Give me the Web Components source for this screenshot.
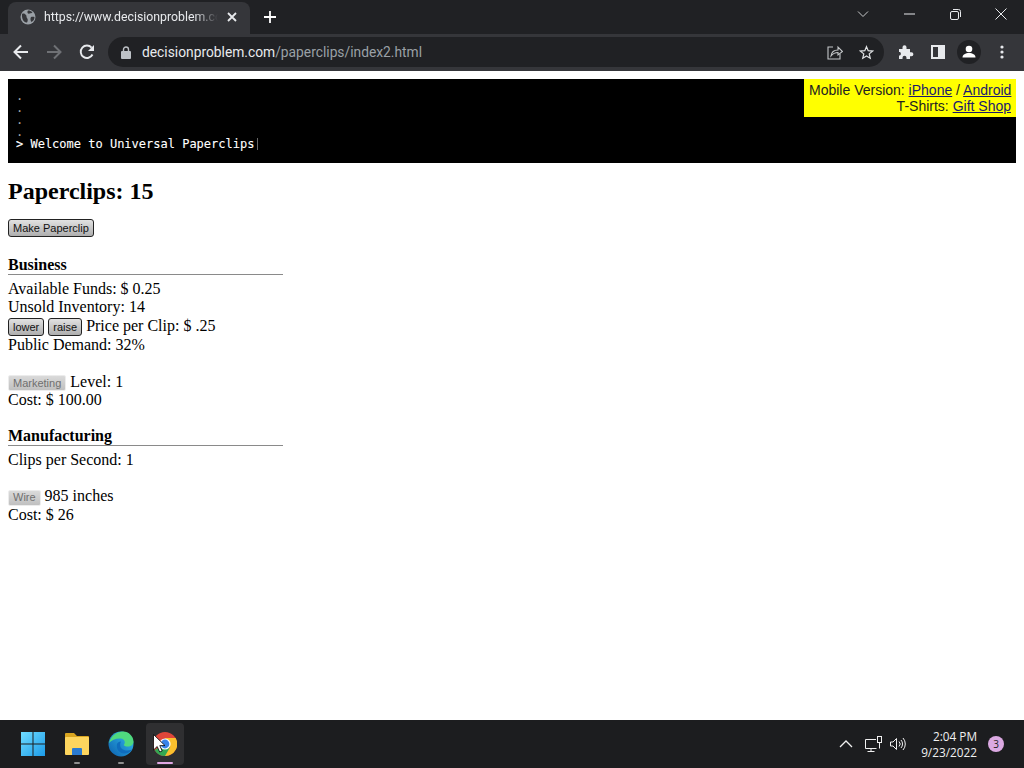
<!DOCTYPE html>
<html lang="en"><head><meta charset="utf-8"><title>Universal Paperclips</title>
<style>
html,body{margin:0;height:768px;overflow:hidden;background:#fff}
body{display:flex;flex-direction:column;width:1024px}
game-page{flex:1;min-height:0}
</style></head><body>
<browser-chrome></browser-chrome>
<game-page>
  <console-panel><promo-box></promo-box></console-panel>
  <clip-count>Paperclips: 15</clip-count>
  <action-row><push-button>Make Paperclip</push-button></action-row>
  <game-section title="Business">
    <div>Available Funds: $ 0.25</div>
    <div>Unsold Inventory: 14</div>
    <div><push-button tight>lower</push-button> <push-button tight>raise</push-button> Price per Clip: $ .25</div>
    <div>Public Demand: 32%</div>
    <div class="gap"><push-button disabled>Marketing</push-button> Level: 1</div>
    <div>Cost: $ 100.00</div>
  </game-section>
  <game-section title="Manufacturing">
    <div>Clips per Second: 1</div>
    <div class="gap"><push-button disabled>Wire</push-button> 985 inches</div>
    <div>Cost: $ 26</div>
  </game-section>
</game-page>
<win-taskbar></win-taskbar>
<script>
function def(name,html){
  customElements.define(name,class extends HTMLElement{
    connectedCallback(){
      if(this.shadowRoot)return;
      const r=this.attachShadow({mode:'open'});
      r.innerHTML=typeof html==='function'?html(this):html;
    }
  });
}
const ui='"Roboto","Liberation Sans",sans-serif';
def('browser-chrome',`<style>
:host{display:block;height:71px;background:#202124;font-family:${ui};color:#e8eaed;flex:none}
.top{height:34px;display:flex;align-items:flex-end;position:relative}
.tab{margin-left:8px;width:242px;height:32px;background:#35363a;border-radius:8px 8px 0 0;display:flex;align-items:center;box-sizing:border-box;padding:0 0 2px 12px}
.tab .t{margin-left:8px;width:174px;white-space:nowrap;font-size:12.3px;color:#e8eaed;-webkit-mask-image:linear-gradient(90deg,#000 150px,transparent 174px);mask-image:linear-gradient(90deg,#000 150px,transparent 174px)}
.x{margin-left:9px;display:flex}
.plus{margin-left:14px;margin-bottom:11px;display:flex}
.win{margin-left:auto;display:flex;align-items:center;align-self:flex-start;height:28px}
.win span{width:46px;display:flex;justify-content:center;align-items:center}
.bar{height:37px;background:#35363a;display:flex;align-items:center;box-sizing:border-box;padding-bottom:1px}
.nav{display:flex;align-items:center;gap:17px;margin-left:13px}
.nav svg{display:block}
.omni{margin-left:13px;width:776px;height:30px;background:#202124;border-radius:15px;display:flex;align-items:center;box-sizing:border-box;padding-left:13px;font-size:13.8px}
.url{margin-left:11px;color:#e8eaed;white-space:nowrap}.url i{font-style:normal;color:#9aa0a6}
.omr{margin-left:auto;display:flex;gap:16px;margin-right:10px;align-items:center}
.ext{display:flex;align-items:center;margin-left:14px}
.ext svg{display:block}
</style>
<div class="top">
 <div class="tab">
  <svg width="16" height="16" viewBox="0 0 16 16"><circle cx="8" cy="8" r="7.5" fill="#9aa0a6"/><path d="M2 5c2-1 3 0 4 1s0 2 1 3 1 3 0 4.500C4 14 1.500 10 2 5zM8 1.500c2 0 3 .5 4.500 2-1 1-2 .5-3 1s-2 0-2-1 0-1.500.5-2zM11 8c1-.5 2.500-.5 3.500 0 0 2-1 4-3 5-1-1-1.500-3.500-.5-5z" fill="#35363a"/></svg>
  <div class="t">https://www.decisionproblem.co</div>
  <span class="x"><svg width="10" height="10" viewBox="0 0 10 10"><path d="M1 1l8 8M9 1l-8 8" stroke="#e8eaed" stroke-width="1.800"/></svg></span>
 </div>
 <span class="plus"><svg width="12" height="12" viewBox="0 0 12 12"><path d="M6 0v12M0 6h12" stroke="#fff" stroke-width="1.800"/></svg></span>
 <div class="win">
  <span><svg width="12" height="8" viewBox="0 0 12 8"><path d="M1 1.500l5 5 5-5" fill="none" stroke="#c8c9cb" stroke-width="1"/></svg></span>
  <span><svg width="11" height="2" viewBox="0 0 11 2"><path d="M0 1h11" stroke="#e8eaed" stroke-width="1"/></svg></span>
  <span><svg width="11" height="11" viewBox="0 0 11 11" fill="none" stroke="#e8eaed"><rect x=".5" y="2.500" width="8" height="8" rx="1.500"/><path d="M3 .5h5.500a2 2 0 0 1 2 2V8"/></svg></span>
  <span><svg width="12" height="12" viewBox="0 0 12 12"><path d="M.5.5l11 11M11.500.5l-11 11" stroke="#e8eaed" stroke-width="1"/></svg></span>
 </div>
</div>
<div class="bar">
 <div class="nav">
  <svg width="16" height="16" viewBox="0 0 16 16"><path d="M15 8H2M8 1.500L1.500 8 8 14.500" fill="none" stroke="#e8eaed" stroke-width="2"/></svg>
  <svg width="16" height="16" viewBox="0 0 16 16"><path d="M1 8h13M8 1.500L14.500 8 8 14.500" fill="none" stroke="#6f7175" stroke-width="2"/></svg>
  <svg width="16" height="16" viewBox="0 0 16 16"><path d="M13.500 10.500A6.200 6.200 0 1 1 12.600 3.600" fill="none" stroke="#e8eaed" stroke-width="1.900"/><path d="M15 1v6H9z" fill="#e8eaed"/></svg>
 </div>
 <div class="omni">
  <svg width="10" height="13" viewBox="0 0 10 13"><path d="M2.500 6V3.500a2.500 2.500 0 0 1 5 0V6" fill="none" stroke="#bdc1c6" stroke-width="1.400"/><rect y="5" width="10" height="8" rx="1" fill="#bdc1c6"/></svg>
  <div class="url">decisionproblem.com<i>/paperclips/index2.html</i></div>
  <div class="omr">
   <svg width="16" height="15" viewBox="0 0 16 15" fill="none" stroke="#c4c7c9" stroke-width="1.100"><path d="M6 2H1v12h12V9"/><path d="M4 11c.5-4 3-6 7-6V2l4.500 4.500L11 10V7.500C8 7.500 6 8.500 4 11z"/></svg>
   <svg width="15" height="15" viewBox="0 0 16 16"><path d="M8 1.800l1.800 4.300 4.700.4-3.600 3 1.100 4.600L8 11.700l-4 2.400 1.100-4.600-3.600-3 4.700-.4z" fill="none" stroke="#e0e2e4" stroke-width="1.300"/></svg>
  </div>
 </div>
 <div class="ext">
  <svg width="16" height="16" viewBox="0 0 16 16"><path d="M1 5h3.500V3.300a2 2 0 0 1 4 0V5H12v3.200h1.400a2 2 0 0 1 0 4H12V15H8.500v-1.300a2 2 0 0 0-4 0V15H1v-3.500h1a2.200 2.200 0 0 0 0-3.500H1z" fill="#e8eaed"/></svg>
  <svg width="14" height="14" viewBox="0 0 14 14" style="margin-left:17px"><path fill-rule="evenodd" d="M0 0h14v14H0zM2 2v10h5V2z" fill="#e8eaed"/></svg>
  <svg width="24" height="24" viewBox="0 0 24 24" style="margin-left:12px"><circle cx="12" cy="12" r="12" fill="#202124"/><circle cx="12" cy="9" r="3.300" fill="#fff"/><path d="M5.500 17.500c0-3 3-4.500 6.500-4.500s6.500 1.500 6.500 4.500z" fill="#fff"/></svg>
  <svg width="4" height="14" viewBox="0 0 4 14" style="margin-left:19px"><circle cx="2" cy="2" r="1.600" fill="#e8eaed"/><circle cx="2" cy="7" r="1.600" fill="#e8eaed"/><circle cx="2" cy="12" r="1.600" fill="#e8eaed"/></svg>
 </div>
</div>`);
def('promo-box',`<style>
:host{display:block;background:#ff0;color:#222;font:14px/16px "Liberation Sans",Arial,sans-serif;text-align:right;padding:3px 5px;width:212px;box-sizing:border-box;white-space:nowrap}
a{color:#1a1a6e;text-decoration:underline}
</style><div>Mobile Version: <a>iPhone</a> / <a>Android</a></div><div>T-Shirts: <a>Gift Shop</a></div>`);
def('console-panel',`<style>
:host{display:block;position:relative;height:84px;background:#000;color:#fff;font:12px/12px "DejaVu Sans Mono","Liberation Mono",monospace;box-sizing:border-box;padding:11px 8px 0;}
.p{position:absolute;top:0;right:0}
.l{height:12px;color:#a8a8a8}
.w{margin-top:-1px;height:14px;line-height:14px;white-space:pre;display:flex;align-items:center;-webkit-text-stroke:.1px #fff}
.c{display:inline-block;width:1px;height:12px;background:#666;margin-left:3px}
</style>
<div class="p"><slot></slot></div>
<div class="l">.</div><div class="l">.</div><div class="l">.</div><div class="l">.</div>
<div class="w"><span>&gt; Welcome to Universal Paperclips</span><span class="c"></span></div>`);
def('clip-count',`<style>
:host{display:block;margin:15px 0 13px;font:bold 24px/27px "Liberation Serif","Times New Roman",serif;color:#000}
</style><slot></slot>`);
def('action-row',`<style>
:host{display:block;height:18px;margin-bottom:20px}
</style><slot></slot>`);
def('push-button',(h)=>`<style>
:host{display:inline-block;vertical-align:baseline}
:host([tight]){margin-top:-1px}
button{font:11px/13px "Liberation Sans",Arial,sans-serif;height:18px;padding:1px 4px 0;margin:0;border:1px solid #222;border-radius:3px;color:#111;background:linear-gradient(#e2e2e2,#aeaeae);box-sizing:border-box;display:block}
button[disabled]{border:1px solid #ececec;color:#6f6f6f;background:linear-gradient(#dadada,#c0c0c0);height:16px;border-radius:2px;padding:0 4px}
</style><button ${h.hasAttribute('disabled')?'disabled':''}><slot></slot></button>`);
def('game-section',(h)=>`<style>
:host{display:block;width:275px;font:16px/18.4px "Liberation Serif","Times New Roman",serif;color:#000;margin-bottom:17px}
.h{font-weight:bold;border-bottom:1px solid #8a8a8a;height:18px;line-height:17px;margin-bottom:5px}
::slotted(.gap){margin-top:18.400px}
::slotted(div){white-space:nowrap}
</style><div class="h">${h.getAttribute('title')}</div><slot></slot>`);
def('game-page',`<style>
:host{display:block;padding:8px;background:#fff;color:#000;font-family:"Liberation Serif","Times New Roman",serif;box-sizing:border-box}
</style><slot></slot>`);
def('win-taskbar',`<style>
:host{display:flex;height:48px;flex:none;background:#1c1d1f;align-items:center;font-family:"Open Sans","Liberation Sans",sans-serif;color:#f0f0f0;position:relative}
.apps{display:flex;margin-left:11px;align-items:center}
.app{width:44px;height:42px;display:flex;justify-content:center;align-items:center;position:relative;box-sizing:border-box}
.app.on{background:#2f2f31;border-radius:4px;width:38px;margin-left:3px}
.dot{position:absolute;bottom:1px;left:50%;transform:translateX(-50%);width:6px;height:2px;border-radius:1px;background:#8f8f8f}
.on .dot{width:16px;background:#e0a8e4}
.cursor{position:absolute;left:7px;top:11px}
.tray{margin-left:auto;display:flex;align-items:center}
.clock{font-size:11.800px;line-height:16px;text-align:right;margin-left:14px}
.badge{width:16px;height:16px;border-radius:50%;background:#dba9e2;color:#222;font-size:10px;line-height:16px;text-align:center;margin:0 20px 0 11px}
</style>
<div class="apps">
 <div class="app"><svg width="24" height="24" viewBox="0 0 24 24"><defs><linearGradient id="w" x1="0" y1="0" x2="1" y2="1"><stop offset="0" stop-color="#6fdcff"/><stop offset="1" stop-color="#1c9be8"/></linearGradient></defs><path d="M0 0h11.500v11.500H0zM12.500 0H24v11.500H12.500zM0 12.500h11.500V24H0zM12.500 12.500H24V24H12.500z" fill="url(#w)"/></svg></div>
 <div class="app"><svg width="26" height="24" viewBox="0 0 26 24"><path d="M1 2a1 1 0 0 1 1-1h8l3 3h11a1 1 0 0 1 1 1v4H1z" fill="#d9a520"/><rect x="1" y="5" width="24" height="18" rx="1" fill="#fdd55e"/><path d="M8 23v-6a1 1 0 0 1 1-1h8a1 1 0 0 1 1 1v6z" fill="#2a7ad0"/></svg><span class="dot"></span></div>
 <div class="app"><svg width="26" height="26" viewBox="0 0 26 26"><defs><linearGradient id="e" x1="0" y1="1" x2="1" y2="0"><stop offset="0" stop-color="#0b5fae"/><stop offset="1" stop-color="#35c1f1"/></linearGradient></defs><circle cx="13" cy="13" r="12.500" fill="url(#e)"/><path d="M1 12C3 4 10 .5 15 .5c6 0 10.500 5 10.500 10 0 3-2.500 5-6 5-2 0-3.500-.8-3.800-1.600 2-1.500 1.500-6-3-6.400C8 7.200 3.500 9 1 12z" fill="#4fd97f"/><path d="M9 13c-1 5 2 9 7 9.500 3 .3 6-1 8-4-3 1.500-8 1.500-10.500-1C11.500 15.500 12 12 13 10.500 11 10.500 9.500 11.500 9 13z" fill="#0f6cbd"/></svg><span class="dot"></span></div>
 <div class="app on"><svg width="24" height="24" viewBox="0 0 24 24"><circle cx="12" cy="12" r="12" fill="#e0463a"/><path d="M12 12L1.600 18A12 12 0 0 0 12 24c1 0 1.500 0 2-.2L18 12z" fill="#33a853"/><path d="M12 6h10.600A12 12 0 0 1 12 24l5.200-9z" fill="#fbc02d"/><circle cx="12" cy="12" r="5.600" fill="#fff"/><circle cx="12" cy="12" r="4.400" fill="#3a83e8"/></svg><span class="dot"></span>
  <svg class="cursor" width="12" height="19" viewBox="0 0 12 19"><path d="M.5.500V16l3.700-3.500L6.700 18l2.500-1-2.400-5.400H12z" fill="#fff" stroke="#000" stroke-width=".8"/></svg></div>
</div>
<div class="tray">
 <svg width="14" height="8" viewBox="0 0 14 8" style="margin-right:12px"><path d="M1 7l6-6 6 6" fill="none" stroke="#f0f0f0" stroke-width="1.300"/></svg>
 <svg width="17" height="16" viewBox="0 0 17 16" fill="none" stroke="#f0f0f0" style="margin-right:8px"><path d="M11 3.500H.5v9h11M6 12.500v3M2.500 15.500h7"/><rect x="12.500" y=".5" width="4" height="6"/><path d="M14.500 6.500v6"/></svg>
 <svg width="17" height="14" viewBox="0 0 17 14" fill="none" stroke="#f0f0f0"><path d="M.5 5v4H3l3.500 3.500v-11L3 5zM9 4.500a3.500 3.500 0 0 1 0 5M11 3a6 6 0 0 1 0 8M13 1a9 9 0 0 1 0 12"/></svg>
 <div class="clock"><div>2:04 PM</div><div>9/23/2022</div></div>
 <div class="badge">3</div>
</div>`);
</script>
</body></html>
